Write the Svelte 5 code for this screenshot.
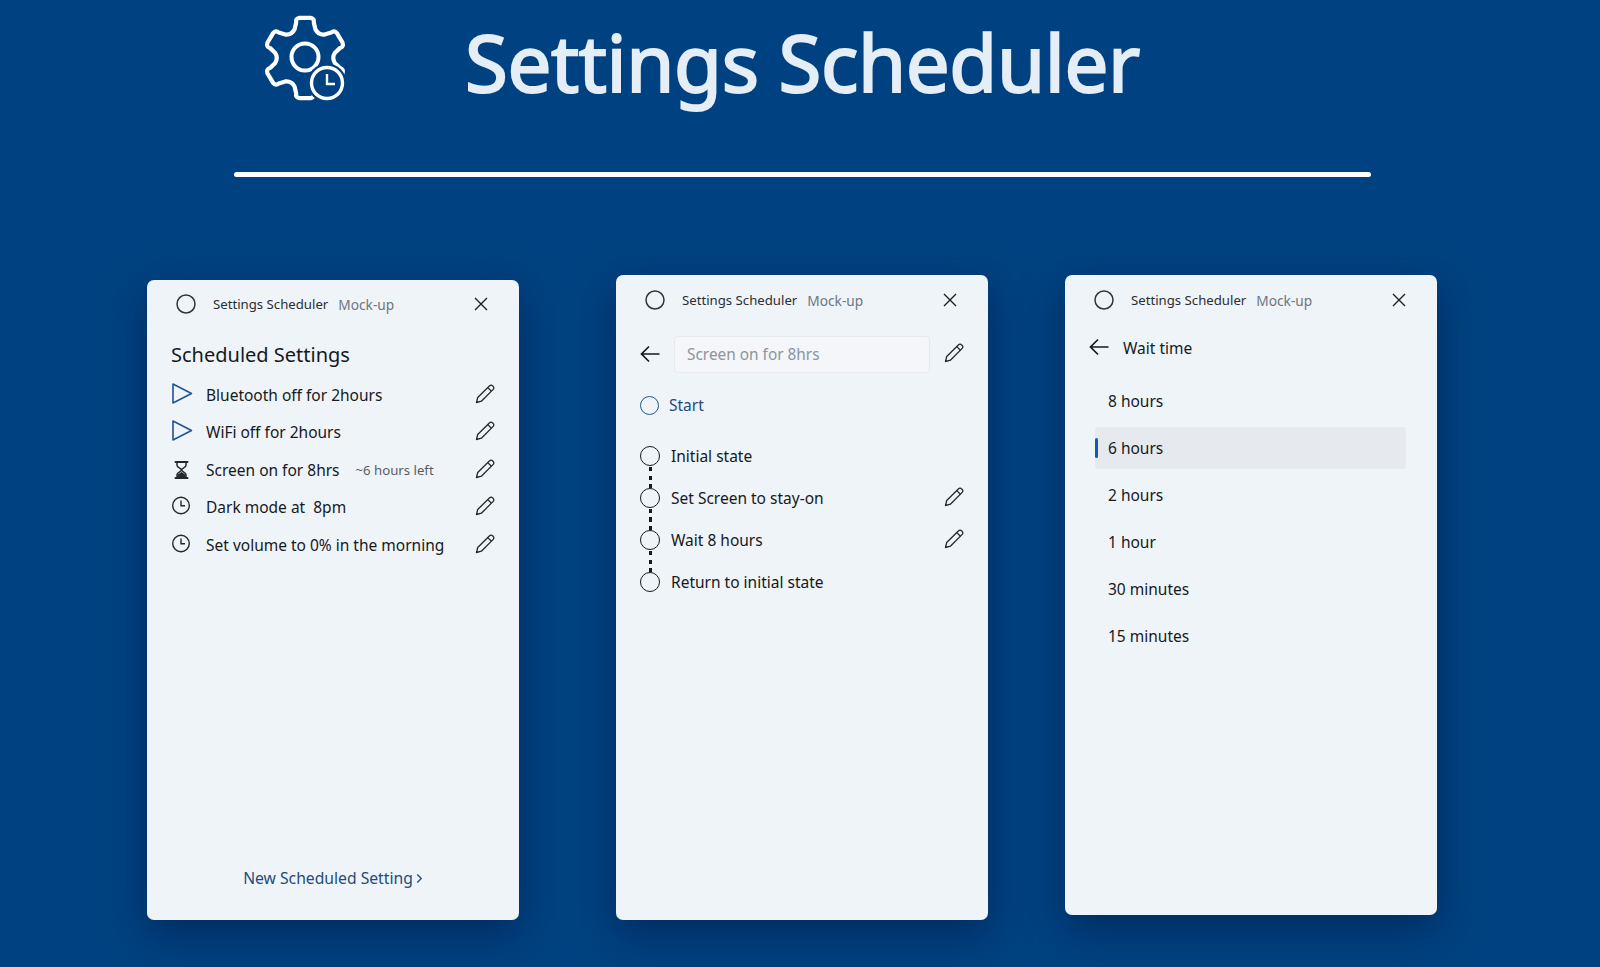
<script>
  const scheduled = [
    { icon: 'play', label: 'Bluetooth off for 2hours' },
    { icon: 'play', label: 'WiFi off for 2hours' },
    { icon: 'hourglass', label: 'Screen on for 8hrs', note: '~6 hours left' },
    { icon: 'clock', label: 'Dark mode at  8pm' },
    { icon: 'clock', label: 'Set volume to 0% in the morning' }
  ];

  const steps = [
    { label: 'Initial state' },
    { label: 'Set Screen to stay-on', edit: true },
    { label: 'Wait 8 hours', edit: true },
    { label: 'Return to initial state' }
  ];

  const waits = ['8 hours', '6 hours', '2 hours', '1 hour', '30 minutes', '15 minutes'];
  const selectedWait = '6 hours';

  // six rounded teeth around the centre of the logo
  function gearPath(cx, cy, outer, inner, teeth) {
    const pt = (r, deg) => {
      const a = ((deg - 90) * Math.PI) / 180;
      return (cx + r * Math.cos(a)).toFixed(1) + ' ' + (cy + r * Math.sin(a)).toFixed(1);
    };
    const step = 360 / teeth;
    let d = '';
    for (let i = 0; i < teeth; i++) {
      const c = i * step;
      d += (i === 0 ? 'M' : 'L') + pt(outer - 4, c - 14);
      d += 'Q' + pt(outer, c - 14) + ' ' + pt(outer, c - 8);
      d += 'L' + pt(outer, c + 8);
      d += 'Q' + pt(outer, c + 14) + ' ' + pt(outer - 4, c + 14);
      d += 'L' + pt(inner + 2, c + 20);
      d += 'Q' + pt(inner - 2, c + 30) + ' ' + pt(inner + 2, c + 40);
    }
    return d + 'Z';
  }
</script>

{#snippet pencil()}
  <svg class="pencil" viewBox="0 0 20 20" width="20" height="20" aria-hidden="true">
    <path d="M1.5 18.5l1.2-5L14.6 1.8a2 2 0 0 1 2.9 0l.7.7a2 2 0 0 1 0 2.9L6.4 17.2z" />
    <path d="M12.8 3.6l3.6 3.6" />
  </svg>
{/snippet}

{#snippet rowIcon(kind)}
  {#if kind === 'play'}
    <svg class="row-icon play" viewBox="0 0 22 22" width="22" height="22" aria-hidden="true">
      <path d="M1 1L19.5 10.5 1 20z" />
    </svg>
  {:else if kind === 'hourglass'}
    <svg class="row-icon glass" viewBox="0 0 22 22" width="22" height="22" aria-hidden="true">
      <path class="caps" d="M3.5 3h12M3.5 19h12" />
      <path d="M5 3v3.5c0 2 4.5 3.2 4.5 4.5S5 13.5 5 15.5V19M14 3v3.5c0 2-4.5 3.2-4.5 4.5s4.5 2.5 4.5 4.5V19" />
      <path class="sand" d="M5.5 18.5v-2.8L9.5 13l4 2.7v2.8z" />
    </svg>
  {:else}
    <svg class="row-icon" viewBox="0 0 22 22" width="22" height="22" aria-hidden="true">
      <circle cx="9" cy="9.5" r="8.3" />
      <path d="M9 4.5v5.2h4" />
    </svg>
  {/if}
{/snippet}

{#snippet titleBar()}
  <div class="titlebar">
    <svg class="app-dot" viewBox="0 0 20 20" width="20" height="20" aria-hidden="true">
      <circle cx="10" cy="10" r="9" />
    </svg>
    <span class="app-name">Settings Scheduler</span>
    <span class="app-tag">Mock-up</span>
    <svg class="close" viewBox="0 0 14 14" width="14" height="14" aria-hidden="true">
      <path d="M1 1l12 12M13 1L1 13" />
    </svg>
  </div>
{/snippet}

{#snippet backArrow()}
  <svg class="back" viewBox="0 0 20 18" width="20" height="18" aria-hidden="true">
    <path d="M19.5 9H1.5M9 1.5L1.5 9 9 16.5" />
  </svg>
{/snippet}

<main class="page">
  <header class="hero">
    <svg class="logo" viewBox="0 0 84 90" width="84" height="90" aria-hidden="true">
      <path class="gear" d={gearPath(41, 44, 40.5, 28.5, 6)} />
      <circle class="hub" cx="41" cy="43" r="13.5" />
      <circle class="halo" cx="63" cy="69" r="19.5" />
      <circle class="dial" cx="63" cy="69" r="15.5" />
      <path class="hands" d="M63 60v10h8" />
    </svg>
    <h1>Settings Scheduler</h1>
  </header>
  <div class="rule"></div>

  <section class="cards">
    <article class="card card-list">
      {@render titleBar()}
      <h2>Scheduled Settings</h2>
      <ul class="schedule">
        {#each scheduled as item}
          <li>
            {@render rowIcon(item.icon)}
            <span class="row-label">{item.label}</span>
            {#if item.note}<span class="row-note">{item.note}</span>{/if}
            {@render pencil()}
          </li>
        {/each}
      </ul>
      <a class="new-link" href="#new">New Scheduled Setting
        <svg viewBox="0 0 8 12" width="7" height="11" aria-hidden="true"><path d="M1.5 1.5L6 6l-4.5 4.5" /></svg>
      </a>
    </article>

    <article class="card card-edit">
      {@render titleBar()}
      <div class="edit-head">
        {@render backArrow()}
        <div class="name-field">Screen on for 8hrs</div>
        {@render pencil()}
      </div>
      <div class="start">
        <span class="start-dot"></span>
        <span>Start</span>
      </div>
      <ol class="steps">
        {#each steps as step}
          <li>
            <span class="step-dot"></span>
            <span class="step-label">{step.label}</span>
            {#if step.edit}{@render pencil()}{/if}
          </li>
        {/each}
      </ol>
    </article>

    <article class="card card-wait">
      {@render titleBar()}
      <div class="wait-head">
        {@render backArrow()}
        <span>Wait time</span>
      </div>
      <ul class="waits">
        {#each waits as wait}
          <li class:selected={wait === selectedWait}>{wait}</li>
        {/each}
      </ul>
    </article>
  </section>
</main>

<style>
  :global(body) {
    margin: 0;
    background: #004281;
  }

  .page {
    height: 967px;
    overflow: hidden;
    background: #004281;
    font-family: "Noto Sans", "Open Sans", sans-serif;
    color: #16191d;
  }

  .hero {
    display: flex;
    align-items: flex-start;
    height: 171.5px;
    padding-left: 264px;
    box-sizing: border-box;
  }
  .logo {
    margin-top: 14px;
    fill: none;
    stroke: #fff;
  }
  .gear {
    stroke-width: 4.2;
    stroke-linejoin: round;
  }
  .hub {
    stroke-width: 4;
  }
  .halo {
    fill: #004281;
    stroke: none;
  }
  .dial {
    stroke-width: 3.4;
  }
  .hands {
    stroke-width: 2.4;
  }
  h1 {
    margin: 0 0 0 117px;
    font-size: 78px;
    line-height: 124px;
    font-weight: 400;
    letter-spacing: -0.4px;
    -webkit-text-stroke: 2px #e5edf6;
    color: #e5edf6;
    white-space: nowrap;
  }

  .rule {
    width: 1137px;
    height: 5px;
    margin-left: 234px;
    border-radius: 3px;
    background: #fff;
  }

  .cards {
    display: flex;
    align-items: flex-start;
    padding: 98.5px 0 0 147px;
  }
  .card {
    display: flex;
    flex-direction: column;
    box-sizing: border-box;
    width: 372px;
    border-radius: 7px;
    background: #eff4f9;
    box-shadow: 0 14px 42px rgba(0, 25, 65, 0.55);
  }
  .card-list {
    height: 640px;
    margin-top: 5px;
  }
  .card-edit {
    height: 645px;
    margin-left: 97px;
  }
  .card-wait {
    height: 640px;
    margin-left: 77px;
  }

  .titlebar {
    display: flex;
    align-items: center;
    height: 48px;
    flex: none;
    padding-left: 29px;
    font-size: 13.2px;
  }
  .card-edit .titlebar,
  .card-wait .titlebar {
    height: 50px;
  }
  .app-dot {
    fill: none;
    stroke: #30343a;
    stroke-width: 1.5;
  }
  .app-name {
    margin-left: 17px;
    color: #2a2e33;
  }
  .app-tag {
    margin-left: 10px;
    font-size: 13.7px;
    color: #6e7680;
  }
  .close {
    margin-left: auto;
    margin-right: 31px;
    fill: none;
    stroke: #1c1f23;
    stroke-width: 1.4;
  }

  h2 {
    margin: 7px 0 0;
    padding-left: 24px;
    height: 41px;
    font-size: 20px;
    line-height: 40px;
    font-weight: 400;
  }

  ul,
  ol {
    list-style: none;
    margin: 0;
    padding: 0;
  }

  .schedule li {
    display: flex;
    align-items: center;
    height: 37.5px;
    padding: 0 24px 0 25px;
    font-size: 15.5px;
  }
  .row-icon {
    flex: none;
    margin-right: 12px;
    fill: none;
    stroke: #24282d;
    stroke-width: 1.4;
  }
  .row-icon.play {
    margin-top: -2px;
    stroke: #1f5590;
    stroke-width: 1.6;
    stroke-linejoin: round;
  }
  .row-icon.glass {
    stroke-width: 1.5;
  }
  .caps {
    stroke-width: 2;
    stroke-linecap: round;
  }
  .sand {
    fill: #24282d;
    stroke: none;
  }
  .row-label {
    white-space: pre;
  }
  .row-note {
    margin-left: 16px;
    font-size: 13.2px;
    color: #575d65;
  }
  .pencil {
    flex: none;
    margin-left: auto;
    margin-top: -2px;
    fill: none;
    stroke: #24282d;
    stroke-width: 1.3;
    stroke-linejoin: round;
  }

  .new-link {
    display: flex;
    align-items: center;
    justify-content: center;
    gap: 3px;
    margin-top: auto;
    padding-bottom: 31px;
    font-size: 15.7px;
    color: #1f4a80;
    text-decoration: none;
  }
  .new-link svg {
    fill: none;
    stroke: #1f4a80;
    stroke-width: 1.5;
  }

  .edit-head {
    display: flex;
    align-items: center;
    height: 38px;
    margin-top: 10px;
    padding: 0 24px;
  }
  .back {
    flex: none;
    fill: none;
    stroke: #16191d;
    stroke-width: 1.7;
  }
  .name-field {
    box-sizing: border-box;
    width: 256px;
    height: 37px;
    margin-left: 14px;
    padding-left: 12px;
    border: 1px solid #e6eaef;
    border-radius: 4px;
    background: #f4f6f9;
    font-size: 15.4px;
    line-height: 35px;
    color: #8d949c;
  }
  .start {
    display: flex;
    align-items: center;
    gap: 10px;
    height: 24px;
    margin-top: 20px;
    padding-left: 24px;
    font-size: 15.5px;
    color: #1f4a80;
  }
  .start-dot {
    box-sizing: border-box;
    width: 19px;
    height: 19px;
    border: 1.8px solid #1f5590;
    border-radius: 50%;
  }

  .steps {
    margin-top: 18px;
  }
  .steps li {
    position: relative;
    display: flex;
    align-items: center;
    height: 42px;
    padding: 0 24px;
    font-size: 15.5px;
  }
  .step-dot {
    flex: none;
    box-sizing: border-box;
    width: 20px;
    height: 20px;
    border: 1.8px solid #16191d;
    border-radius: 50%;
  }
  /* dashed link between two neighbouring steps */
  .steps li:not(:last-child)::after {
    content: "";
    position: absolute;
    left: 33px;
    top: 32px;
    width: 2.5px;
    height: 21px;
    background: repeating-linear-gradient(#16191d 0 4px, transparent 4px 8.5px);
  }
  .step-label {
    margin-left: 11px;
  }

  .wait-head {
    display: flex;
    align-items: center;
    gap: 14px;
    height: 44px;
    margin-top: 1px;
    padding-left: 24px;
    font-size: 15.5px;
  }
  .wait-head .back {
    margin-top: -3px;
  }
  .waits {
    margin-top: 9.5px;
    padding: 0 31px 0 30px;
  }
  .waits li {
    position: relative;
    box-sizing: border-box;
    height: 42px;
    margin-bottom: 5px;
    padding-left: 13px;
    border-radius: 4px;
    font-size: 15.5px;
    line-height: 42px;
  }
  .waits li.selected {
    background: #e6e9ee;
  }
  .waits li.selected::before {
    content: "";
    position: absolute;
    left: 0;
    top: 11px;
    width: 3px;
    height: 20px;
    border-radius: 2px;
    background: #0f5cab;
  }
</style>
